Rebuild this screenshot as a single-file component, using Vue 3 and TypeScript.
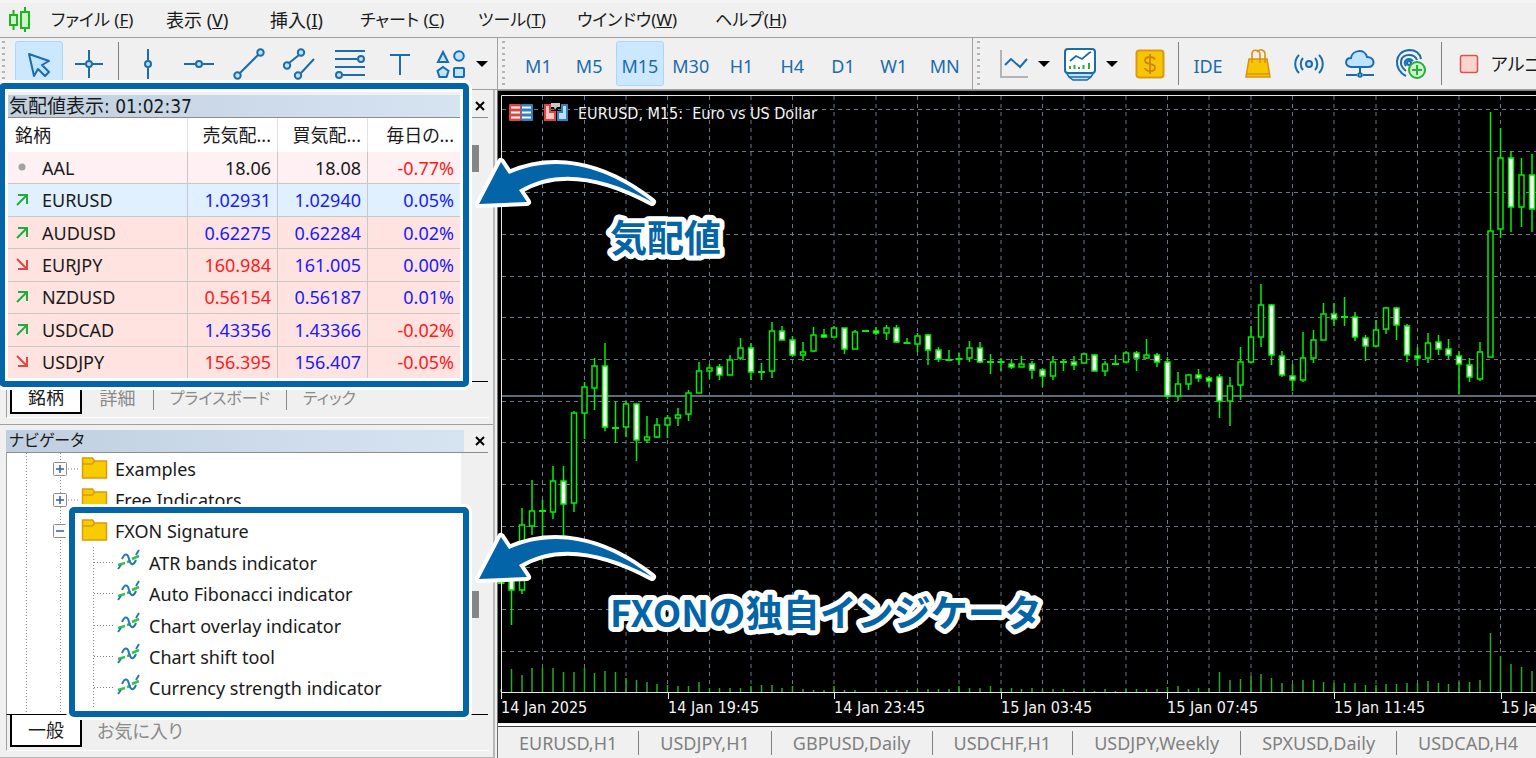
<script setup lang="ts">
import { computed } from 'vue'

interface MenuEntry { label: string; key: string; kana?: boolean }
const menus: MenuEntry[] = [
  { label: 'ファイル ', key: 'F', kana: true },
  { label: '表示 ', key: 'V' },
  { label: '挿入', key: 'I' },
  { label: 'チャート ', key: 'C', kana: true },
  { label: 'ツール', key: 'T', kana: true },
  { label: 'ウインドウ', key: 'W', kana: true },
  { label: 'ヘルプ', key: 'H', kana: true },
]

const timeframes = ['M1', 'M5', 'M15', 'M30', 'H1', 'H4', 'D1', 'W1', 'MN']

interface Quote {
  symbol: string
  dir: 'none' | 'up' | 'down'
  bid: string
  bidTone: string
  ask: string
  askTone: string
  change: string
  changeTone: string
  row: string
}
const quotes: Quote[] = [
  { symbol: 'AAL', dir: 'none', bid: '18.06', bidTone: 'plain', ask: '18.08', askTone: 'plain', change: '-0.77%', changeTone: 'red', row: 'pale' },
  { symbol: 'EURUSD', dir: 'up', bid: '1.02931', bidTone: 'blue', ask: '1.02940', askTone: 'blue', change: '0.05%', changeTone: 'blue', row: 'selected' },
  { symbol: 'AUDUSD', dir: 'up', bid: '0.62275', bidTone: 'blue', ask: '0.62284', askTone: 'blue', change: '0.02%', changeTone: 'blue', row: 'pink' },
  { symbol: 'EURJPY', dir: 'down', bid: '160.984', bidTone: 'red', ask: '161.005', askTone: 'blue', change: '0.00%', changeTone: 'blue', row: 'pink' },
  { symbol: 'NZDUSD', dir: 'up', bid: '0.56154', bidTone: 'red', ask: '0.56187', askTone: 'blue', change: '0.01%', changeTone: 'blue', row: 'pink' },
  { symbol: 'USDCAD', dir: 'up', bid: '1.43356', bidTone: 'blue', ask: '1.43366', askTone: 'blue', change: '-0.02%', changeTone: 'red', row: 'pink' },
  { symbol: 'USDJPY', dir: 'down', bid: '156.395', bidTone: 'red', ask: '156.407', askTone: 'blue', change: '-0.05%', changeTone: 'red', row: 'pink' },
]

const folders = [
  { name: 'Examples', open: false },
  { name: 'Free Indicators', open: false },
  { name: 'FXON Signature', open: true },
]
const indicators = [
  'ATR bands indicator',
  'Auto Fibonacci indicator',
  'Chart overlay indicator',
  'Chart shift tool',
  'Currency strength indicator',
]

const chartTabs = ['EURUSD,H1', 'USDJPY,H1', 'GBPUSD,Daily', 'USDCHF,H1', 'USDJPY,Weekly', 'SPXUSD,Daily', 'USDCAD,H4']

// kind, high, body top, body bottom, low
type Bar = ['h' | 'f' | 'd', number, number, number, number]
const bars: Bar[] = [
  ['d', 582, 583, 583, 584], ['f', 570, 576, 590, 625], ['h', 508, 525, 590, 594], ['h', 480, 511, 526, 535],
  ['d', 500, 511, 511, 561], ['h', 466, 481, 512, 519], ['f', 466, 481, 504, 540], ['h', 411, 413, 503, 512],
  ['h', 382, 387, 413, 439], ['h', 358, 366, 388, 410], ['f', 343, 366, 427, 431], ['d', 402, 428, 428, 443],
  ['h', 401, 404, 427, 437], ['f', 403, 404, 440, 461], ['h', 416, 437, 440, 443], ['h', 418, 425, 437, 438],
  ['h', 415, 418, 425, 438], ['h', 408, 415, 418, 426], ['h', 390, 393, 414, 421], ['h', 362, 371, 393, 393],
  ['h', 364, 368, 371, 379], ['f', 364, 367, 375, 380], ['h', 355, 360, 375, 375], ['h', 338, 348, 358, 360],
  ['f', 343, 348, 372, 380], ['d', 363, 372, 372, 380], ['h', 322, 331, 371, 378], ['f', 326, 331, 340, 340],
  ['f', 336, 340, 355, 357], ['h', 342, 352, 355, 361], ['h', 327, 335, 351, 352], ['f', 329, 335, 337, 337],
  ['h', 326, 328, 337, 337], ['f', 328, 328, 349, 354], ['h', 330, 332, 349, 349], ['d', 331, 331, 331, 332],
  ['f', 327, 331, 333, 335], ['h', 325, 328, 333, 340], ['f', 325, 328, 342, 343], ['d', 338, 343, 343, 344],
  ['h', 333, 336, 344, 352], ['f', 334, 335, 350, 365], ['f', 347, 350, 359, 362], ['d', 350, 360, 360, 360],
  ['d', 353, 359, 359, 365], ['h', 341, 348, 358, 362], ['f', 342, 348, 362, 363], ['d', 354, 362, 362, 374],
  ['d', 358, 362, 362, 371], ['f', 359, 364, 367, 369], ['h', 356, 364, 367, 367], ['f', 361, 364, 370, 379],
  ['f', 368, 370, 376, 387], ['h', 356, 362, 376, 380], ['d', 359, 362, 362, 371], ['f', 356, 362, 365, 370],
  ['h', 353, 354, 363, 363], ['f', 354, 355, 371, 371], ['h', 361, 364, 371, 376], ['d', 355, 364, 364, 364],
  ['h', 351, 353, 362, 363], ['f', 351, 353, 358, 371], ['h', 339, 355, 358, 359], ['f', 353, 355, 362, 367],
  ['f', 357, 362, 396, 399], ['h', 372, 384, 396, 401], ['h', 374, 375, 384, 390], ['f', 369, 375, 378, 382],
  ['f', 376, 378, 381, 387], ['f', 374, 377, 401, 418], ['h', 377, 386, 401, 426], ['h', 347, 362, 385, 400],
  ['h', 326, 337, 362, 363], ['h', 284, 305, 337, 347], ['f', 304, 305, 355, 365], ['f', 351, 356, 375, 377],
  ['f', 364, 376, 380, 391], ['h', 332, 358, 380, 382], ['h', 330, 340, 358, 363], ['h', 303, 314, 340, 340],
  ['f', 303, 314, 319, 326], ['d', 297, 317, 317, 326], ['f', 312, 317, 337, 341], ['f', 335, 338, 346, 361],
  ['h', 320, 330, 346, 347], ['h', 307, 308, 329, 334], ['f', 307, 308, 325, 340], ['f', 324, 326, 355, 362],
  ['f', 347, 356, 358, 366], ['h', 333, 343, 358, 363], ['f', 335, 342, 349, 355], ['f', 339, 349, 355, 359],
  ['f', 351, 356, 364, 394], ['f', 358, 365, 377, 382], ['h', 342, 352, 379, 381], ['h', 112, 231, 357, 357],
  ['h', 128, 158, 229, 238], ['f', 151, 158, 207, 232], ['h', 158, 175, 207, 227], ['f', 154, 175, 209, 232],
]
const volumes = [
  3, 23, 17, 24, 24, 24, 20, 20, 24, 19, 21, 20, 14, 12, 10, 8, 7, 6, 6, 10, 4, 4, 4, 4, 6, 7, 7, 4, 6, 3, 2, 2, 6,
  2, 2, 0, 0, 2, 2, 2, 3, 3, 3, 3, 6, 4, 4, 6, 4, 4, 3, 4, 3, 3, 3, 1, 3, 1, 3, 1, 3, 3, 3, 3, 5, 6, 3, 4, 4, 20,
  12, 13, 16, 18, 14, 9, 8, 12, 12, 10, 9, 9, 9, 7, 7, 8, 8, 9, 9, 11, 9, 8, 10, 10, 12, 59, 36, 28, 25, 21,
]

const barX = (i: number): number => Math.round((501 + i * 10.414) * 2) / 2
const candles = computed(() => bars.map((b, i) => ({ x: barX(i), kind: b[0], high: b[1], top: b[2], bottom: b[3], low: b[4] })))
const gridX = Array.from({ length: 50 }, (_, i) => barX((i + 1) * 4))
const gridY = Array.from({ length: 14 }, (_, i) => Math.round(109 + i * 41.67) + 0.5)
const chartTitle = 'EURUSD, M15:\u00a0 Euro vs US Dollar'
const axisLabels = ['14 Jan 2025', '14 Jan 19:45', '14 Jan 23:45', '15 Jan 03:45', '15 Jan 07:45', '15 Jan 11:45', '15 Jan 15:45']
  .map((text, i) => ({ text, x: Math.round(501 + i * 166.6) }))
</script>

<template>
  <div class="terminal">
    <nav class="menubar">
      <svg class="logo" width="24" height="28" viewBox="0 0 24 28" fill="#c9f5c9" stroke="#1fb31f" stroke-width="2">
        <path d="M5.500 4v20M17 1v25" />
        <rect x="2" y="9" width="7" height="10" />
        <rect x="13" y="6" width="8" height="16" />
      </svg>
      <button v-for="m in menus" :key="m.key" type="button" :class="{ kana: m.kana }">{{ m.label }}(<u>{{ m.key }}</u>)</button>
    </nav>

    <header class="toolbar">
      <div class="group drawing">
        <i class="grip"></i>
        <button type="button" class="tool active" aria-label="cursor">
          <svg width="30" height="30" viewBox="0 0 30 30"><path d="M5 5l20 7-7 4 7 7-4 4-7-7-4 7z" fill="#bfe4ff" stroke="#1a6cab" stroke-width="2" stroke-linejoin="round" /></svg>
        </button>
        <button type="button" class="tool" aria-label="crosshair">
          <svg width="30" height="30" viewBox="0 0 30 30" class="ln"><path d="M15 1v10M15 19v10M1 15h10M19 15h10" /><circle cx="15" cy="15" r="3" /></svg>
        </button>
        <i class="sep"></i>
        <div class="tools">
          <button type="button" class="tool" aria-label="vertical line">
            <svg width="30" height="30" viewBox="0 0 30 30" class="ln"><path d="M15 0v11M15 19v11" /><circle cx="15" cy="15" r="3" /></svg>
          </button>
          <button type="button" class="tool" aria-label="horizontal line">
            <svg width="32" height="30" viewBox="0 0 32 30" class="ln"><path d="M1 15h11M20 15h11" /><circle cx="16" cy="15" r="3" /></svg>
          </button>
          <button type="button" class="tool" aria-label="trend line">
            <svg width="32" height="32" viewBox="0 0 32 32" class="ln"><path d="M7 25L25 7" /><circle cx="4.500" cy="27.500" r="3.200" /><circle cx="27.500" cy="4.500" r="3.200" /></svg>
          </button>
          <button type="button" class="tool" aria-label="channel">
            <svg width="32" height="32" viewBox="0 0 32 32" class="ln"><path d="M6 15L16 7M18 25L31 11" /><circle cx="4" cy="17.500" r="3.200" /><circle cx="18" cy="4.500" r="3.200" /><circle cx="15" cy="27.500" r="3.200" /></svg>
          </button>
          <button type="button" class="tool" aria-label="fibonacci">
            <svg width="32" height="32" viewBox="0 0 32 32" class="ln"><path d="M1 3h30M1 11h22M1 19h30M9 27h22" /><circle cx="27" cy="11" r="3" /><circle cx="5" cy="27" r="3" /></svg>
          </button>
          <button type="button" class="tool" aria-label="text">
            <svg width="24" height="28" viewBox="0 0 24 28" class="ln"><path d="M2 5h20M12 5v20" /></svg>
          </button>
          <button type="button" class="tool" aria-label="shapes">
            <svg width="30" height="32" viewBox="0 0 30 32" class="ln"><path d="M7 4l5 10H2zM7 19l5.500 4-2 6h-7l-2-6z" /><circle cx="23" cy="8" r="4.800" /><rect x="18" y="20" width="10" height="9" rx="1" /></svg>
          </button>
        </div>
        <i class="caret"></i>
      </div>
      <div class="group frames">
        <i class="grip"></i>
        <div class="tools">
          <button v-for="t in timeframes" :key="t" type="button" class="tool tf" :class="{ active: t === 'M15' }">{{ t }}</button>
        </div>
      </div>
      <div class="group extras">
        <i class="grip"></i>
        <button type="button" class="icon w-chart" aria-label="chart type">
          <svg width="30" height="32" viewBox="0 0 30 32" fill="none"><path d="M2 2v27h27" stroke="#b4b4b4" stroke-width="2" /><path d="M6 17l6-6 9 8 7-8" stroke="#1a6cab" stroke-width="2" /></svg>
        </button>
        <i class="caret"></i>
        <button type="button" class="icon w-window" aria-label="indicators">
          <svg width="34" height="34" viewBox="0 0 34 34" fill="none">
            <path d="M3 25h28l-3 5-4 3H10l-4-3z" fill="#bfe0f7" stroke="#1a6cab" stroke-width="1.500" />
            <path d="M6 30h22" stroke="#1a6cab" stroke-width="1.500" />
            <rect x="2" y="2" width="30" height="24" rx="3" fill="#fff" stroke="#1a6cab" stroke-width="2" />
            <path d="M7 14l6-5 6 3 7-6 2-1" stroke="#1a6cab" stroke-width="1.800" />
            <path d="M7 22v-3M11.500 22v-4M16 22v-2M20.500 22v-4M26 22v-6" stroke="#27ae3c" stroke-width="2" />
          </svg>
        </button>
        <i class="caret"></i>
        <button type="button" class="icon w-gold" aria-label="market">
          <svg width="30" height="30" viewBox="0 0 30 30"><rect x="1.500" y="1.500" width="27" height="27" rx="3" fill="#f7c600" stroke="#dd9a10" stroke-width="2" /><path d="M20 10.500c-1-2-3-2.500-5-2.500-3 0-5 1.200-5 3.400 0 4.800 10 2.200 10 7 0 2.300-2.200 3.600-5 3.600-2.500 0-4.500-1-5.200-3M15 5v20" fill="none" stroke="#c98512" stroke-width="1.800" /></svg>
        </button>
        <i class="sep"></i>
        <button type="button" class="tool tf w-ide">IDE</button>
        <button type="button" class="icon w-tool" aria-label="shop">
          <svg width="28" height="32" viewBox="0 0 28 32"><path d="M5 11h18l3 18H2z" fill="#f7c600" stroke="#d9920f" stroke-width="1.500" /><path d="M8 15V6c0-5 7-5 8 0v9M13 4c3-4 8-2 8 2v9M3 26h22" fill="none" stroke="#d9920f" stroke-width="1.600" /></svg>
        </button>
        <button type="button" class="icon w-tool" aria-label="signals">
          <svg width="30" height="24" viewBox="0 0 30 24" class="ln"><circle cx="15" cy="12" r="3" /><path d="M9 6c-3 3-3 9 0 12M21 6c3 3 3 9 0 12M5 3c-5 5-5 13 0 18M25 3c5 5 5 13 0 18" fill="none" /></svg>
        </button>
        <button type="button" class="icon w-tool" aria-label="cloud">
          <svg width="32" height="30" viewBox="0 0 32 30" class="ln"><path d="M7 18c-7-1-6-9 0-9 1-8 14-10 16-1 8 0 9 10 1 10zM16 18v6M2 26h11M19 26h11" /><circle cx="16" cy="26" r="1.800" /></svg>
        </button>
        <button type="button" class="icon w-tool" aria-label="hosting">
          <svg width="32" height="32" viewBox="0 0 32 32" class="ln"><path d="M11 28C-2 22-1 3 14 2c7 0 11 4 12 9M11 23C3 17 5 7 14 7c4 0 7 2 8 5M11 18c-3-4 0-7 3-7 2 0 3 1 4 2" fill="none" /><circle cx="14" cy="15" r="2" /><circle cx="22" cy="22" r="8" fill="#c9f5c9" stroke="#27ae3c" /><path d="M17 22h10M22 17v10" stroke="#27ae3c" /></svg>
        </button>
        <i class="sep"></i>
        <button type="button" class="algo">
          <svg width="20" height="20" viewBox="0 0 20 20"><rect x="1.500" y="1.500" width="17" height="17" rx="2" fill="#ffd3cc" stroke="#d9534f" stroke-width="1.500" /></svg>
          アルゴリズム取引
        </button>
      </div>
    </header>

    <main class="workspace">
      <aside class="dock">
        <section class="panel market">
          <div class="title"><h2>気配値表示: 01:02:37</h2><button type="button" aria-label="close"><svg width="12" height="12" viewBox="0 0 12 12"><path d="M2 2l8 8M10 2l-8 8" stroke="#000" stroke-width="2" /></svg></button></div>
          <div class="content">
            <table>
              <colgroup><col class="c-symbol" /><col class="c-price" /><col class="c-price" /><col class="c-change" /></colgroup>
              <thead>
                <tr><th>銘柄</th><th>売気配...</th><th>買気配...</th><th>毎日の...</th></tr>
              </thead>
              <tbody>
                <tr v-for="q in quotes" :key="q.symbol" :class="q.row">
                  <td>
                    <span class="sym">
                      <svg width="14" height="14" viewBox="0 0 14 14" fill="none" stroke-width="2">
                        <circle v-if="q.dir === 'none'" cx="7" cy="6" r="3.500" fill="#a3a3a3" />
                        <path v-else-if="q.dir === 'up'" d="M2 12L12 2M3 2h9v9" stroke="#1fae3c" />
                        <path v-else d="M2 1l10 10M12 2v9H3" stroke="#dc4a41" />
                      </svg>{{ q.symbol }}
                    </span>
                  </td>
                  <td :class="q.bidTone">{{ q.bid }}</td>
                  <td :class="q.askTone">{{ q.ask }}</td>
                  <td :class="q.changeTone">{{ q.change }}</td>
                </tr>
              </tbody>
            </table>
            <div class="scroll"><i class="thumb"></i></div>
          </div>
          <div class="tabs">
            <button type="button" class="on">銘柄</button>
            <button type="button" class="ruled">詳細</button>
            <button type="button" class="ruled wide">プライスボード</button>
            <button type="button" class="mid">ティック</button>
          </div>
        </section>

        <section class="panel navigator">
          <div class="title"><h2>ナビゲータ</h2><button type="button" aria-label="close"><svg width="12" height="12" viewBox="0 0 12 12"><path d="M2 2l8 8M10 2l-8 8" stroke="#000" stroke-width="2" /></svg></button></div>
          <div class="content">
            <div class="tree">
              <ul>
                <li v-for="f in folders" :key="f.name" class="folder">
                  <svg width="62" height="32" viewBox="0 0 62 32" fill="none">
                    <path d="M20 16h12" stroke="#808080" stroke-dasharray="1 2" />
                    <rect x="5.500" y="9.500" width="13" height="13" rx="1" fill="#fafafa" stroke="#8c8c8c" />
                    <path :d="f.open ? 'M8 16h8' : 'M8 16h8M12 12v8'" stroke="#3a5f9f" stroke-width="1.500" />
                    <path d="M34.500 5h10l2 3h12v17h-24z" fill="#f9cb00" stroke="#d99a0b" stroke-width="1.500" />
                    <path d="M35 11h9l3-3" stroke="#d99a0b" stroke-width="1.500" />
                  </svg>
                  <span>{{ f.name }}</span>
                </li>
                <li v-for="n in indicators" :key="n" class="leaf">
                  <svg width="48" height="32" viewBox="0 0 48 32" fill="none">
                    <path d="M0 15.500h20" stroke="#808080" stroke-dasharray="1 2" />
                    <path d="M24 18l7-2M33 15l4-1M38 12l7-3" stroke="#35c24a" stroke-width="2.500" />
                    <path d="M24 22l3-4M28 12c3-7 6-5 7 0s4 8 7 1M42 8l3-5" stroke="#2a78b8" stroke-width="2" />
                  </svg>
                  <span>{{ n }}</span>
                </li>
              </ul>
            </div>
            <div class="scroll"><i class="thumb"></i></div>
          </div>
          <div class="tabs">
            <button type="button" class="on">一般</button>
            <button type="button" class="fav">お気に入り</button>
          </div>
        </section>
      </aside>

      <section class="charting">
        <svg class="chart" role="img" aria-label="EURUSD, M15">
          <g transform="translate(-498 -91)">
            <g class="grid">
              <line v-for="x in gridX" :key="'x' + x" :x1="x" :x2="x" y1="96" y2="692" />
              <line v-for="y in gridY" :key="'y' + y" x1="502" x2="2600" :y1="y" :y2="y" />
            </g>
            <line x1="502" x2="2600" y1="396" y2="396" stroke="#5d6a78" stroke-width="2" />
            <line v-for="(v, i) in volumes" :key="'v' + i" :x1="barX(i)" :x2="barX(i)" y1="692" :y2="692 - v" stroke="#27a827" stroke-width="1.500" />
            <g v-for="c in candles" :key="c.x" stroke="#00f000" stroke-width="1.500">
              <line :x1="c.x" :x2="c.x" :y1="c.high" :y2="c.top" />
              <line :x1="c.x" :x2="c.x" :y1="c.bottom" :y2="c.low" />
              <line v-if="c.kind === 'd'" :x1="c.x - 3.5" :x2="c.x + 3.5" :y1="c.top" :y2="c.top" stroke-width="2" />
              <rect v-else :x="c.x - 2.5" :y="c.top" width="5" :height="c.bottom - c.top" :fill="c.kind === 'f' ? '#fff' : '#000'" />
            </g>
            <path d="M501.500 698V95.500H2600M501 692.500H2600" fill="none" stroke="#e8e8e8" />
            <g class="axis">
              <template v-for="l in axisLabels" :key="l.text">
                <line :x1="l.x + 0.5" :x2="l.x + 0.5" y1="692" y2="699" stroke="#e8e8e8" />
                <text :x="l.x" y="713">{{ l.text }}</text>
              </template>
              <text x="578" y="119">{{ chartTitle }}</text>
            </g>
            <g>
              <rect x="509" y="104" width="12" height="17" rx="1" fill="#e0443e" />
              <rect x="521" y="104" width="12" height="17" rx="1" fill="#2f7fc1" />
              <path d="M511 107.500h9M511 112.500h9M511 117.500h9M522 107.500h9M522 112.500h9M522 117.500h9" stroke="#fff" stroke-width="2" />
              <path d="M545 105h5v7h5v8h-10z" fill="#ffc9c2" stroke="#e0443e" stroke-width="2" />
              <path d="M567 105h-5v7h-4v8h9z" fill="#bfe0f7" stroke="#2f7fc1" stroke-width="2" />
              <path d="M551 103h9v4h-3l-2 3-1-3h-3z" fill="#c8c8c8" />
            </g>
          </g>
        </svg>
        <div class="chart-tabs">
          <button v-for="t in chartTabs" :key="t" type="button">{{ t }}</button>
        </div>
      </section>
    </main>

    <svg class="callouts">
      <g v-for="(b, i) in [{ x: 2, y: 86, w: 464, h: 298 }, { x: 72, y: 510, w: 394, h: 204 }]" :key="i" fill="none">
        <rect :x="b.x" :y="b.y" :width="b.w" :height="b.h" rx="2" stroke="#fff" stroke-width="12" />
        <rect :x="b.x" :y="b.y" :width="b.w" :height="b.h" rx="2" stroke="#0464a8" stroke-width="6" />
      </g>
      <path
        v-for="dy in [0, 375]"
        :key="dy"
        :transform="`translate(0 ${dy})`"
        d="M479 204L501 162L509 174C550 156 600 161 652 202C600 174 555 168 519 190L527 202Z"
        class="halo"
      />
      <text x="610" y="252" class="halo">気配値</text>
      <text x="610" y="627" class="halo">FXONの独自インジケータ</text>
    </svg>
  </div>
</template>

<style>
html,
body {
  margin: 0;
  background: #f0f0f0;
}
</style>

<style scoped>
.terminal {
  position: relative;
  display: flex;
  flex-direction: column;
  height: 100vh;
  min-height: 758px;
  overflow: hidden;
  background: #f0f0f0;
  color: #1a1a1a;
  font-family: 'Noto Sans', 'Noto Sans CJK JP', sans-serif;
  font-size: 18px;
  line-height: 24px;
  font-feature-settings: 'palt';
}
button {
  padding: 0;
  border: 0;
  background: none;
  color: inherit;
  font: inherit;
  font-feature-settings: inherit;
  white-space: nowrap;
}
svg {
  display: block;
  flex: none;
}
.menubar {
  display: grid;
  grid-template-columns: 51px 115px 104px 90px 118px 99px 138px auto;
  align-items: center;
  justify-content: start;
  height: 37px;
  box-sizing: border-box;
  border-top: 3px solid #f5f5f5;
  text-align: left;
}
.menubar button {
  justify-self: start;
}
.menubar .kana {
  font-size: 17px;
}
.logo {
  margin-left: 8px;
}
.toolbar {
  display: flex;
  flex: none;
  height: 53px;
  box-sizing: border-box;
  border-top: 1px solid #a0a0a0;
  border-bottom: 1px solid #a0a0a0;
  color: #1a6cab;
}
.group {
  display: flex;
  align-items: center;
  flex: none;
  border-right: 1px solid #a0a0a0;
}
.drawing {
  width: 497px;
}
.frames {
  width: 474px;
}
.extras {
  flex: 1 0 0;
  border: 0;
}
.grip {
  align-self: stretch;
  flex: none;
  width: 3px;
  margin: 3px 12px 1px 2px;
  background: repeating-linear-gradient(#b4b4b4 0 2px, transparent 2px 6px);
}
.drawing .grip {
  margin-right: 10px;
}
.frames .grip {
  margin: 3px 8px 1px 4px;
}
.extras .grip {
  margin: 3px 10px 1px 4px;
}
.tool {
  display: flex;
  align-items: center;
  justify-content: center;
  box-sizing: border-box;
  width: 48px;
  height: 45px;
  border: 1px solid transparent;
  border-radius: 3px;
}
.tool.active {
  border-color: #a8d8fb;
  background: #cce8ff;
}
.drawing .tool + .tool {
  margin-left: 2px;
}
.tools {
  display: flex;
}
.drawing .tools {
  width: 353px;
}
.frames .tools {
  width: 457px;
}
.tools .tool,
.drawing .tools .tool {
  flex: 1 1 0;
  width: auto;
  margin: 0 1px;
}
.tf {
  padding-top: 4px;
}
.sep {
  flex: none;
  width: 1px;
  height: 43px;
  margin: 0 5px;
  background: #808080;
}
.drawing .sep {
  margin-right: 4px;
}
.caret {
  flex: none;
  width: 0;
  height: 0;
  border: 6px solid transparent;
  border-top-color: #000;
  border-bottom: 0;
}
.ln {
  fill: #bfe4ff;
  stroke: #1a6cab;
  stroke-width: 2;
}
.icon {
  display: flex;
  align-items: center;
  justify-content: center;
  box-sizing: border-box;
  height: 45px;
}
.w-chart {
  width: 48px;
}
.w-window {
  width: 56px;
  padding-left: 4px;
}
.w-gold {
  width: 63px;
  margin-right: -8px;
}
.w-ide {
  width: 48px;
}
.w-tool {
  width: 51px;
}
.algo {
  display: flex;
  align-items: center;
  gap: 12px;
  margin-left: 12px;
  color: #1a1a1a;
}
.workspace {
  display: flex;
  flex: 1;
  min-height: 0;
}
.dock {
  display: flex;
  flex-direction: column;
  flex: 0 0 495px;
  border-right: 2px solid #b8b8b8;
  border-bottom: 1px solid #b8b8b8;
  box-sizing: border-box;
}
.panel {
  display: flex;
  flex-direction: column;
  margin: 4px 4px 0 6px;
}
.title {
  display: flex;
  align-items: center;
  justify-content: space-between;
  height: 23px;
}
.title h2 {
  flex: 0 0 454px;
  margin: 0;
  padding-left: 3px;
  box-sizing: border-box;
  background: linear-gradient(90deg, #c0cfdf, #d6e4f2);
  font: 400 19px/22px 'DejaVu Sans Condensed', 'Noto Sans CJK JP', sans-serif;
}
.navigator .title h2 {
  flex-basis: 458px;
  font-size: 16px;
  font-feature-settings: 'palt';
}
.title button {
  margin-right: 3px;
}
.content {
  display: flex;
  border-top: 1px solid #8c8c8c;
  border-left: 1px solid #a0a0a0;
  margin-right: 1px;
}
.market .content {
  height: 263px;
  border-bottom: 1px solid #000;
}
table {
  width: 454px;
  height: 261px;
  table-layout: fixed;
  border-collapse: separate;
  border-spacing: 0;
  background: #fff;
}
.c-symbol {
  width: 181px;
}
.c-price {
  width: 90px;
}
th,
td {
  padding: 0 6px;
  border-right: 1px solid #c8c8c8;
  border-bottom: 1px solid #c8c8c8;
  font-weight: 400;
  text-align: right;
  white-space: nowrap;
}
th {
  height: 34px;
  padding-left: 8px;
  border-bottom: 0;
  border-color: #e2e2e2;
}
th:first-child,
td:first-child {
  text-align: left;
}
td:first-child {
  padding-left: 8px;
}
.sym {
  display: flex;
  align-items: center;
  gap: 13px;
}
.pale {
  background: #fff0f4;
}
.selected {
  background: #e0f0ff;
}
.pink {
  background: #ffe3e0;
}
.red {
  color: #ff1a1a;
}
.blue {
  color: #1a1aff;
}
.scroll {
  flex: 1;
  background: #f0f0f0;
}
.thumb {
  display: block;
  width: 7px;
  height: 27px;
  margin: 27px 0 0 11px;
  background: #868686;
}
.navigator .thumb {
  margin-top: 138px;
}
.tabs {
  display: flex;
  height: 35px;
  padding-left: 3px;
  border-left: 1px solid #a0a0a0;
  border-bottom: 1px solid #fff;
  color: #8a8a8a;
}
.tabs button {
  width: 72px;
  height: 24px;
  margin-top: 4px;
  line-height: 24px;
}
.tabs .on {
  height: 32px;
  margin: 0;
  border: solid #000;
  border-width: 0 2px 2px;
  background: #fff;
  color: #1a1a1a;
}
.tabs .ruled {
  border-right: 1px solid #8a8a8a;
}
.tabs .wide {
  width: 133px;
  font-size: 16px;
}
.tabs .mid {
  width: 85px;
  font-size: 16px;
}
.tabs .fav {
  width: 116px;
}
.navigator {
  margin: 6px 0 0;
  padding: 4px 4px 0 6px;
  border-top: 1px solid #a0a0a0;
}
.navigator .content {
  height: 261px;
  border-bottom: 1px solid #000;
}
.tree {
  width: 454px;
  background:
    repeating-linear-gradient(#909090 0 1px, transparent 1px 3px) 19px 0 / 1px 100% no-repeat,
    repeating-linear-gradient(#909090 0 1px, transparent 1px 3px) 53px 0 / 1px 100% no-repeat,
    repeating-linear-gradient(#909090 0 1px, transparent 1px 3px) 86px 94px / 1px 160px no-repeat,
    #fff;
}
.tree ul {
  display: grid;
  grid-template-rows: repeat(8, 1fr);
  height: 251px;
  margin: 0;
  padding: 0;
  list-style: none;
}
.tree li {
  display: flex;
  align-items: center;
  min-height: 0;
}
.folder {
  gap: 5px;
  padding-left: 41px;
}
.leaf {
  gap: 7px;
  padding-left: 87px;
}
.charting {
  display: flex;
  flex-direction: column;
  flex: 1;
  min-width: 0;
  margin-left: 2px;
  border-left: 1px solid #707070;
  border-top: 1px solid #808080;
}
.chart {
  flex: 1 1 0;
  width: 100%;
  min-height: 0;
  background: #000;
}
.grid line {
  stroke: #66788a;
  stroke-width: 1;
  stroke-dasharray: 4 4;
}
.axis text {
  fill: #f4f4f4;
  font: 16px 'DejaVu Sans Condensed', sans-serif;
}
.chart-tabs {
  display: flex;
  align-items: center;
  flex: none;
  height: 31px;
  border-top: 1px solid #404040;
  box-shadow: 0 -2px 0 #fff;
  overflow: hidden;
  margin-top: 3px;
  color: #808080;
}
.chart-tabs button {
  flex: none;
  padding: 0 21px;
  border-right: 1px solid #808080;
}
.chart-tabs button:last-child {
  padding-right: 0;
  border: 0;
}
.callouts {
  position: absolute;
  inset: 0;
  width: 100%;
  height: 100%;
  pointer-events: none;
}
.halo {
  fill: #0464a8;
  stroke: #fff;
  stroke-width: 8px;
  stroke-linejoin: round;
  paint-order: stroke;
  font: 700 37px 'Noto Sans CJK JP', sans-serif;
}
text.halo {
  stroke-width: 10px;
}
</style>
